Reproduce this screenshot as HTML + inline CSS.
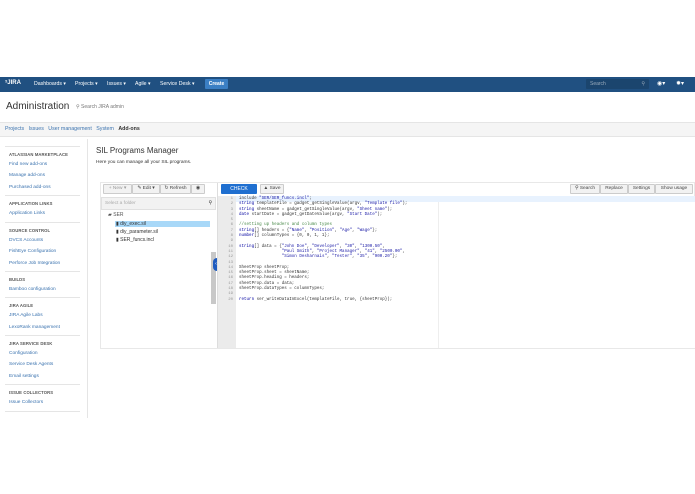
<!DOCTYPE html><html><head><style>
*{margin:0;padding:0;box-sizing:border-box}
body{width:695px;height:494px;background:#fff;font-family:"Liberation Sans",sans-serif;position:relative;overflow:hidden;color:#333}
.a{position:absolute;white-space:nowrap}
.hdr{left:0;top:77px;width:695px;height:15px;background:#205081}
.nav{color:#fff;font-size:5.2px;top:81px}
.sb{font-size:4.8px;color:#3b73af;left:9px}
.sh{font-size:4.2px;color:#555;font-weight:bold;left:9px;letter-spacing:.1px}
.sep{left:5px;width:75px;height:1px;background:#e5e5e5}
.btn{border:1px solid #ccc;background:#f2f2f2;font-size:4.8px;color:#444;height:10px;line-height:8px;text-align:center;border-radius:1px}
.code{font-family:"Liberation Mono",monospace;font-size:4.2px;line-height:5.3px;color:#333}
.s{color:#1a1aa6}.k{color:#0000a0}.c{color:#4a8a4a}
.gut{font-family:"Liberation Mono",monospace;font-size:4px;line-height:5.3px;color:#999;text-align:right}
</style></head><body>
<div class="a hdr"></div>
<div class="a nav" style="left:5px;top:80px;font-weight:bold;font-size:6px">&#x1D53;JIRA</div>
<div class="a nav" style="left:34px">Dashboards ▾</div>
<div class="a nav" style="left:75px">Projects ▾</div>
<div class="a nav" style="left:107px">Issues ▾</div>
<div class="a nav" style="left:135px">Agile ▾</div>
<div class="a nav" style="left:160px">Service Desk ▾</div>
<div class="a" style="left:205px;top:79px;width:23px;height:10px;background:#3b7fc4;border-radius:1px;color:#fff;font-size:5px;font-weight:bold;text-align:center;line-height:10px">Create</div>
<div class="a" style="left:586px;top:79px;width:63px;height:10px;background:#1b456e;border-radius:1px;color:#9ab;font-size:5px;line-height:10px;padding-left:4px">Search<span style="position:absolute;right:4px">⚲</span></div>
<div class="a nav" style="left:657px;top:80px;font-size:6px">◉▾</div>
<div class="a nav" style="left:676px;top:80px;font-size:6px">✹▾</div>
<div class="a" style="left:6px;top:101px;font-size:10px;color:#333">Administration</div>
<div class="a" style="left:76px;top:104px;font-size:5px;color:#777">⚲ Search JIRA admin</div>
<div class="a" style="left:0;top:122px;width:695px;height:15px;background:#f5f5f5;border-top:1px solid #e5e5e5;border-bottom:1px solid #e5e5e5"></div>
<div class="a" style="left:5px;top:126px;font-size:5.3px;color:#3b73af">Projects &nbsp;&nbsp;Issues &nbsp;&nbsp;User management &nbsp;&nbsp;System &nbsp;&nbsp;<b style="color:#333">Add-ons</b></div>
<div class="a" style="left:87px;top:139px;width:1px;height:279px;background:#e5e5e5"></div>
<div class="a sep" style="top:146px"></div>
<div class="a sh" style="top:152px">ATLASSIAN MARKETPLACE</div>
<div class="a sb" style="top:162px">Find new add-ons</div>
<div class="a sb" style="top:173px">Manage add-ons</div>
<div class="a sb" style="top:185px">Purchased add-ons</div>
<div class="a sep" style="top:195px"></div>
<div class="a sh" style="top:201px">APPLICATION LINKS</div>
<div class="a sb" style="top:211px">Application Links</div>
<div class="a sep" style="top:222px"></div>
<div class="a sh" style="top:228px">SOURCE CONTROL</div>
<div class="a sb" style="top:238px">DVCS Accounts</div>
<div class="a sb" style="top:249px">FishEye Configuration</div>
<div class="a sb" style="top:261px">Perforce Job Integration</div>
<div class="a sep" style="top:271px"></div>
<div class="a sh" style="top:277px">BUILDS</div>
<div class="a sb" style="top:287px">Bamboo configuration</div>
<div class="a sep" style="top:297px"></div>
<div class="a sh" style="top:303px">JIRA AGILE</div>
<div class="a sb" style="top:313px">JIRA Agile Labs</div>
<div class="a sb" style="top:325px">LexoRank management</div>
<div class="a sep" style="top:335px"></div>
<div class="a sh" style="top:341px">JIRA SERVICE DESK</div>
<div class="a sb" style="top:351px">Configuration</div>
<div class="a sb" style="top:362px">Service Desk Agents</div>
<div class="a sb" style="top:374px">Email settings</div>
<div class="a sep" style="top:384px"></div>
<div class="a sh" style="top:390px">ISSUE COLLECTORS</div>
<div class="a sb" style="top:400px">Issue Collectors</div>
<div class="a sep" style="top:411px"></div>
<div class="a" style="left:96px;top:146px;font-size:8px;color:#333">SIL Programs Manager</div>
<div class="a" style="left:96px;top:160px;font-size:4.8px;color:#333">Here you can manage all your SIL programs.</div>
<div class="a" style="left:100px;top:182px;width:595px;height:167px;border:1px solid #e8e8e8"></div>
<div class="a btn" style="left:103px;top:184px;width:29px;color:#999">+ New ▾</div>
<div class="a btn" style="left:132px;top:184px;width:28px">✎ Edit ▾</div>
<div class="a btn" style="left:160px;top:184px;width:31px">↻ Refresh</div>
<div class="a btn" style="left:191px;top:184px;width:14px">◉</div>
<div class="a" style="left:101px;top:197px;width:115px;height:13px;background:#f2f2f2;border:1px solid #e0e0e0;font-size:4.8px;color:#aaa;line-height:11px;padding-left:3px">Select a folder<span style="position:absolute;right:3px;color:#333">⚲</span></div>
<div class="a" style="left:108px;top:212px;font-size:5px;color:#555">▰ SER</div>
<div class="a" style="left:115px;top:221px;width:95px;height:6px;background:#a8d8f8"></div>
<div class="a" style="left:116px;top:221px;font-size:5px;color:#333">▮ diy_exec.sil</div>
<div class="a" style="left:116px;top:229px;font-size:5px;color:#333">▮ diy_parameter.sil</div>
<div class="a" style="left:116px;top:237px;font-size:5px;color:#333">▮ SER_funcs.incl</div>
<div class="a" style="left:211px;top:252px;width:5px;height:52px;background:#c8c8c8"></div>
<div class="a" style="left:213px;top:258px;width:6px;height:13px;background:#1e5bbf;border-radius:4px 0 0 4px;color:#fff;font-size:5px;line-height:13px;text-align:center">‹</div>
<div class="a" style="left:217px;top:183px;width:1px;height:165px;background:#ddd"></div>
<div class="a" style="left:221px;top:184px;width:36px;height:10px;background:#1f6fd0;color:#fff;font-size:5px;text-align:center;line-height:10px;border-radius:1px">CHECK</div>
<div class="a btn" style="left:260px;top:184px;width:24px">▲ Save</div>
<div class="a btn" style="left:570px;top:184px;width:30px">⚲ Search</div>
<div class="a btn" style="left:600px;top:184px;width:28px">Replace</div>
<div class="a btn" style="left:628px;top:184px;width:27px">Settings</div>
<div class="a btn" style="left:655px;top:184px;width:38px">Show usage</div>
<div class="a" style="left:218px;top:196px;width:477px;height:152px;background:#fff"></div>
<div class="a" style="left:218px;top:196px;width:18px;height:152px;background:#ebebeb"></div>
<div class="a" style="left:236px;top:196px;width:459px;height:6px;background:#e8f2fe"></div>
<div class="a" style="left:438px;top:202px;width:1px;height:146px;background:#eee"></div>
<div class="a gut" style="left:220px;top:197px;width:13px">1<br>2<br>3<br>4<br>5<br>6<br>7<br>8<br>9<br>10<br>11<br>12<br>13<br>14<br>15<br>16<br>17<br>18<br>19<br>20</div>
<div class="a code" style="left:239px;top:197px">include <span class="s">"SER/SER_funcs.incl"</span>;<br>
<span class="k">string</span> templateFile = gadget_getSingleValue(argv, <span class="s">"Template file"</span>);<br>
<span class="k">string</span> sheetName = gadget_getSingleValue(argv, <span class="s">"Sheet name"</span>);<br>
<span class="k">date</span> startDate = gadget_getDateValue(argv, <span class="s">"Start Date"</span>);<br><br>
<span class="c">//setting up headers and column types</span><br>
<span class="k">string</span>[] headers = {<span class="s">"Name"</span>, <span class="s">"Position"</span>, <span class="s">"Age"</span>, <span class="s">"Wage"</span>};<br>
<span class="k">number</span>[] columnTypes = {0, 0, 1, 1};<br><br>
<span class="k">string</span>[] data = {<span class="s">"John Doe"</span>, <span class="s">"Developer"</span>, <span class="s">"30"</span>, <span class="s">"1300.50"</span>,<br>
&nbsp;&nbsp;&nbsp;&nbsp;&nbsp;&nbsp;&nbsp;&nbsp;&nbsp;&nbsp;&nbsp;&nbsp;&nbsp;&nbsp;&nbsp;&nbsp;&nbsp;<span class="s">"Paul Smith"</span>, <span class="s">"Project Manager"</span>, <span class="s">"41"</span>, <span class="s">"2500.00"</span>,<br>
&nbsp;&nbsp;&nbsp;&nbsp;&nbsp;&nbsp;&nbsp;&nbsp;&nbsp;&nbsp;&nbsp;&nbsp;&nbsp;&nbsp;&nbsp;&nbsp;&nbsp;<span class="s">"Simon Desharnais"</span>, <span class="s">"Tester"</span>, <span class="s">"35"</span>, <span class="s">"900.20"</span>};<br><br>
SheetProp sheetProp;<br>
sheetProp.sheet = sheetName;<br>
sheetProp.heading = headers;<br>
sheetProp.data = data;<br>
sheetProp.dataTypes = columnTypes;<br><br>
<span class="k">return</span> ser_writeDataInExcel(templateFile, true, {sheetProp});</div>
</body></html>
